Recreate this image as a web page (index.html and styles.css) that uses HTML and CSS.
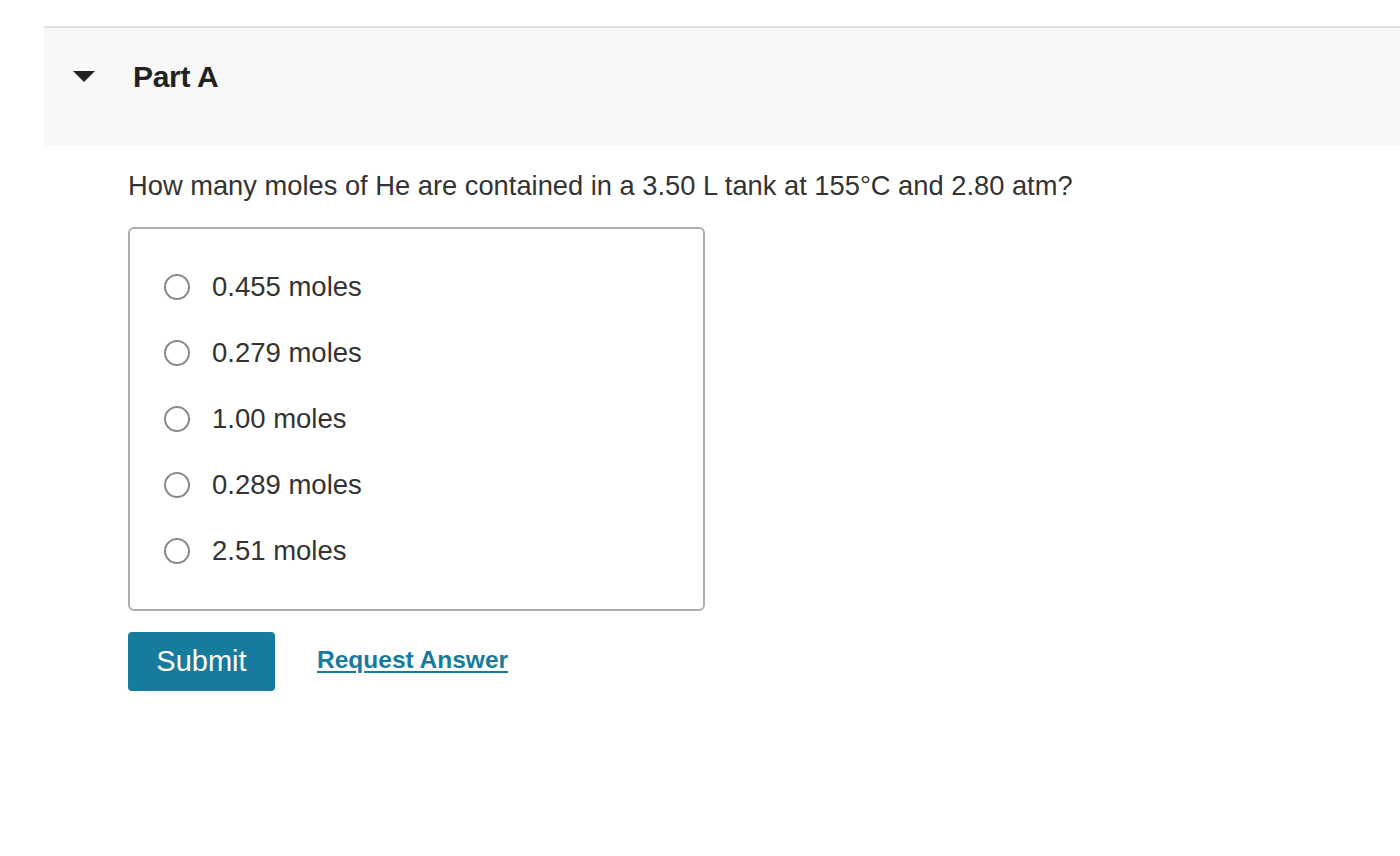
FILE: index.html
```html
<!DOCTYPE html>
<html>
<head>
<meta charset="utf-8">
<link rel="stylesheet" href="styles.css">
</head>
<body>
<div class="page">
  <div class="part-header">
    <span class="caret"></span>
    <h2 class="part-title">Part A</h2>
  </div>
  <div class="part-body">
    <p class="question">How many moles of He are contained in a 3.50 L tank at 155°C and 2.80 atm?</p>
    <div class="choices">
      <label class="choice"><span class="radio"></span><span class="label">0.455 moles</span></label>
      <label class="choice"><span class="radio"></span><span class="label">0.279 moles</span></label>
      <label class="choice"><span class="radio"></span><span class="label">1.00 moles</span></label>
      <label class="choice"><span class="radio"></span><span class="label">0.289 moles</span></label>
      <label class="choice"><span class="radio"></span><span class="label">2.51 moles</span></label>
    </div>
    <div class="actions">
      <button class="submit">Submit</button>
      <a class="request" href="#">Request Answer</a>
    </div>
  </div>
</div>
</body>
</html>
```
FILE: styles.css
```css
* { box-sizing: border-box; }
html, body { margin: 0; padding: 0; background: #fff; }
body { font-family: "Liberation Sans", Arial, sans-serif; color: #333; }
.page { padding-top: 26px; padding-left: 44px; }
.part-header {
  display: flex;
  align-items: center;
  height: 120px;
  background: #f8f8f8;
  border-top: 2px solid #e2e2e2;
  padding-left: 29px;
  padding-bottom: 20px;
}
.caret {
  width: 0; height: 0;
  border-left: 11px solid transparent;
  border-right: 11px solid transparent;
  border-top: 11px solid #222;
  margin-right: 38px;
  margin-top: -2px;
}
.part-title {
  margin: 0;
  font-size: 30px;
  font-weight: bold;
  color: #222;
  letter-spacing: -0.3px;
}
.part-body { padding-left: 84px; padding-top: 24px; }
.question { margin: 0; font-size: 27.3px; line-height: 32px; color: #333; }
.choices {
  margin-top: 25px;
  width: 577px;
  border: 2px solid #adadad;
  border-radius: 6px;
  padding: 25px 0 25px 34px;
  display: flex;
  flex-direction: column;
}
.choice { display: flex; align-items: center; height: 66px; }
.radio {
  width: 26px; height: 26px;
  border: 2px solid #8a8a8a;
  border-radius: 50%;
  background: #fff;
  margin-right: 22px;
}
.label { font-size: 27.5px; color: #333; }
.actions { display: flex; align-items: center; margin-top: 21px; }
.submit {
  width: 147px; height: 59px;
  background: #167b9c;
  color: #fff;
  border: none;
  border-radius: 4px;
  font-family: "Liberation Sans", Arial, sans-serif;
  font-size: 29px;
  padding: 0;
}
.request {
  margin-left: 42px;
  margin-top: -4px;
  font-size: 24.5px;
  font-weight: bold;
  color: #167b9c;
  text-decoration: underline;
  text-decoration-thickness: 2px;
  text-underline-offset: 3px;
}
```
